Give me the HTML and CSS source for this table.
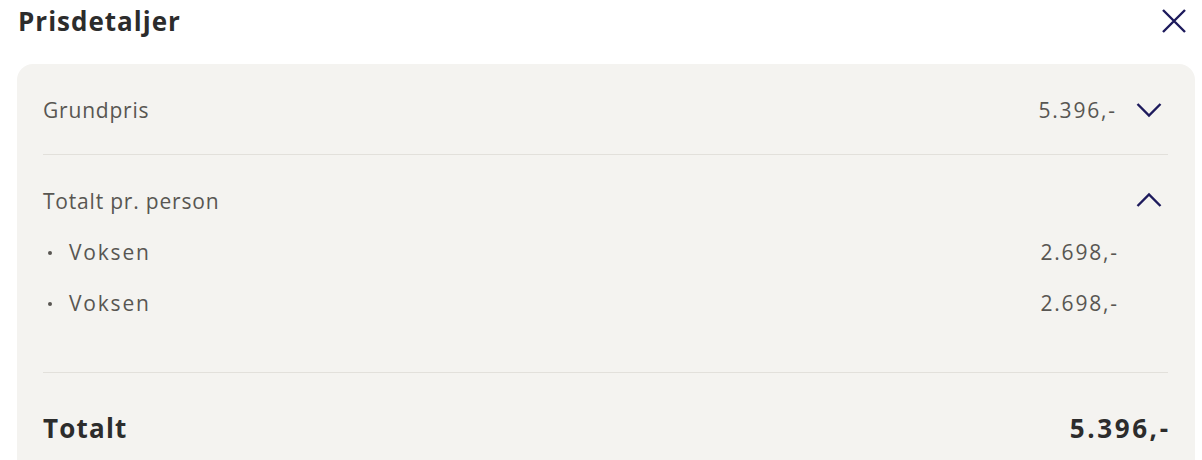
FILE: index.html
```html
<!DOCTYPE html>
<html lang="no">
<head>
<meta charset="utf-8">
<link rel="stylesheet" href="styles.css">
</head>
<body>
<div class="page">
  <header class="head">
    <h1 class="title">Prisdetaljer</h1>
    <button class="close" aria-label="Lukk">
      <svg width="26" height="26" viewBox="0 0 26 26"><path d="M2 2 L24 24 M24 2 L2 24" stroke="#1d1a5c" stroke-width="2.4" fill="none"/></svg>
    </button>
  </header>
  <section class="card">
    <div class="row first">
      <span class="label">Grundpris</span>
      <span class="right">
        <span class="amount">5.396,-</span>
        <svg class="chev" width="26" height="16" viewBox="0 0 26 16"><path d="M1.5 2 L13 13.5 L24.5 2" stroke="#1d1a5c" stroke-width="2.4" fill="none"/></svg>
      </span>
    </div>
    <div class="sep"></div>
    <div class="group">
      <div class="row sub">
        <span class="label">Totalt pr. person</span>
        <span class="right">
          <svg class="chev" width="26" height="16" viewBox="0 0 26 16"><path d="M1.5 14 L13 2.5 L24.5 14" stroke="#1d1a5c" stroke-width="2.4" fill="none"/></svg>
        </span>
      </div>
      <ul class="items">
        <li class="item"><span class="label"><span class="dot"></span>Voksen</span><span class="amount">2.698,-</span></li>
        <li class="item"><span class="label"><span class="dot"></span>Voksen</span><span class="amount">2.698,-</span></li>
      </ul>
    </div>
    <div class="sep"></div>
    <div class="total">
      <span>Totalt</span>
      <span class="total-amount">5.396,-</span>
    </div>
  </section>
</div>
</body>
</html>
```
FILE: styles.css
```css
html, body {
  margin: 0;
  padding: 0;
  background: #ffffff;
}
body {
  font-family: "Open Sans", "Lato", sans-serif;
  color: #585652;
}
.page {
  padding: 0 7px 0 17px;
}
.head {
  display: flex;
  justify-content: space-between;
  align-items: center;
  height: 42px;
}
.title {
  margin: 0;
  padding-left: 1px;
  font-size: 26px;
  font-weight: 700;
  color: #2c2c2c;
  letter-spacing: 1px;
}
.close {
  border: 0;
  background: none;
  padding: 0;
  margin-right: 8px;
  display: flex;
}
.card {
  margin-top: 22px;
  background: #f4f3f0;
  border-radius: 16px;
  padding: 0 27px 0 26px;
  height: 420px;
}
.row {
  display: flex;
  justify-content: space-between;
  align-items: center;
  line-height: 28px;
  font-size: 21px;
  letter-spacing: 0.8px;
}
.amount {
  letter-spacing: 1.8px;
  margin-right: -1.8px;
}
.row.first {
  padding: 32px 0 30px;
}
.right {
  display: flex;
  align-items: center;
  gap: 21px;
  padding-right: 6px;
}
.sep {
  height: 1px;
  background: #e2e0db;
}
.group {
  padding: 32px 0 55px;
}
.row.sub .chev {
  margin-top: -2px;
}
.items {
  list-style: none;
  margin: 0;
  padding: 0;
}
.item {
  display: flex;
  justify-content: space-between;
  align-items: center;
  font-size: 21px;
  letter-spacing: 1.8px;
  line-height: 28px;
  margin-top: 23px;
  padding-right: 51px;
}
.item .label {
  display: flex;
  align-items: center;
}
.dot {
  width: 4px;
  height: 4px;
  border-radius: 50%;
  background: #585652;
  margin: 2px 17px 0 5px;
}
.total {
  display: flex;
  justify-content: space-between;
  align-items: center;
  padding-top: 40px;
  line-height: 30px;
  font-size: 26px;
  font-weight: 700;
  color: #2c2c2c;
  letter-spacing: 1.2px;
}
.total-amount {
  letter-spacing: 2.6px;
  margin-right: -2.6px;
}
```
